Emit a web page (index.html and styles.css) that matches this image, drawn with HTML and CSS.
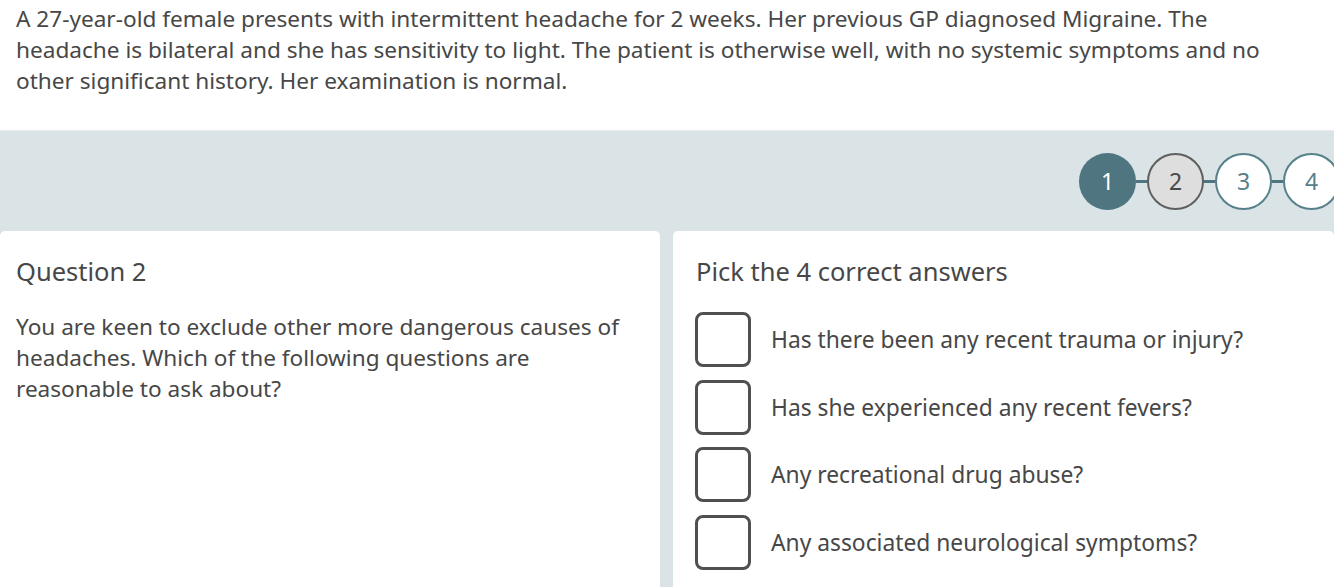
FILE: index.html
```html
<!DOCTYPE html>
<html>
<head>
<meta charset="utf-8">
<link rel="stylesheet" href="styles.css">
</head>
<body>
<div class="page">
  <p class="scenario">A 27-year-old female presents with intermittent headache for 2 weeks. Her previous GP diagnosed Migraine. The headache is bilateral and she has sensitivity to light. The patient is otherwise well, with no systemic symptoms and no other significant history. Her examination is normal.</p>
  <div class="panel">
    <div class="stepbar">
      <div class="stepper">
        <span class="step done">1</span>
        <span class="link"></span>
        <span class="step current">2</span>
        <span class="link"></span>
        <span class="step todo">3</span>
        <span class="link"></span>
        <span class="step todo">4</span>
      </div>
    </div>
    <div class="cards">
      <div class="card question">
        <h2 class="title">Question 2</h2>
        <p class="text">You are keen to exclude other more dangerous causes of headaches. Which of the following questions are reasonable to ask about?</p>
      </div>
      <div class="card answers">
        <h2 class="title">Pick the 4 correct answers</h2>
        <ul class="options">
          <li class="option"><span class="box"></span><span class="label">Has there been any recent trauma or injury?</span></li>
          <li class="option"><span class="box"></span><span class="label">Has she experienced any recent fevers?</span></li>
          <li class="option"><span class="box"></span><span class="label">Any recreational drug abuse?</span></li>
          <li class="option"><span class="box"></span><span class="label">Any associated neurological symptoms?</span></li>
        </ul>
      </div>
    </div>
  </div>
</div>
</body>
</html>
```

FILE: styles.css
```css
html, body {
  margin: 0;
  padding: 0;
  background: #ffffff;
  overflow: hidden;
}
body {
  font-family: "Noto Sans", "Open Sans", sans-serif;
  color: #474747;
}
.page {
  width: 1334px;
}
.scenario {
  margin: 0;
  padding: 3px 36px 0 16px;
  font-size: 22.6px;
  line-height: 31px;
  height: 130px;
  box-sizing: border-box;
}
.panel {
  background: #dae3e6;
  border-top: 1px solid #e6ecee;
  height: 457px;
  box-sizing: border-box;
}
.stepbar {
  height: 100px;
  display: flex;
  align-items: center;
  justify-content: flex-end;
}
.stepper {
  display: flex;
  align-items: center;
  margin-right: -6px;
}
.step {
  width: 57px;
  height: 57px;
  border-radius: 50%;
  box-sizing: border-box;
  display: flex;
  align-items: center;
  justify-content: center;
  font-size: 23px;
}
.step.done {
  background: #4e7580;
  color: #ffffff;
}
.step.current {
  background: #dedede;
  border: 2px solid #5f5f5f;
  color: #4a4a4a;
}
.step.todo {
  background: #ffffff;
  border: 2px solid #56808a;
  color: #56808a;
}
.link {
  width: 11px;
  height: 3px;
  background: #4e7580;
}
.cards {
  display: flex;
  gap: 13px;
}
.card {
  background: #ffffff;
  border-radius: 5px 5px 0 0;
  height: 360px;
  box-sizing: border-box;
}
.question {
  width: 660px;
  padding: 24px 16px 0 16px;
}
.answers {
  flex: 1;
  padding: 24px 16px 0 23px;
}
.title {
  margin: 0;
  font-weight: normal;
  font-size: 25.5px;
  line-height: 32px;
}
.text {
  margin: 24px 0 0 0;
  font-size: 22.6px;
  line-height: 31px;
}
.options {
  list-style: none;
  margin: 25px 0 0 0;
  padding: 0;
  display: flex;
  flex-direction: column;
  gap: 12.7px;
}
.option {
  display: flex;
  align-items: center;
  gap: 20px;
  font-size: 22.8px;
}
.box {
  width: 56px;
  height: 55px;
  border: 3px solid #505050;
  border-radius: 8px;
  box-sizing: border-box;
  flex-shrink: 0;
  margin-left: -1px;
}
```
